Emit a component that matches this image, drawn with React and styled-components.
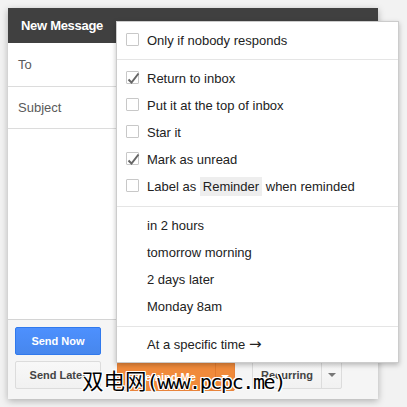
import React from "react";
import styled, { createGlobalStyle } from "styled-components";

const Global = createGlobalStyle`
  html, body { margin: 0; padding: 0; background: #f2f2f2; }
  body { font-family: "Liberation Sans", Arial, sans-serif; }
  * { box-sizing: border-box; }
`;

const Page = styled.div`
  position: relative;
  width: 407px;
  height: 407px;
  padding: 8px;
  overflow: hidden;
`;

const Compose = styled.div`
  position: relative;
  width: 370px;
  height: 391px;
  display: flex;
  flex-direction: column;
  background: #fff;
  box-shadow: 0 2px 7px rgba(0, 0, 0, 0.28);
`;

const Header = styled.div`
  height: 35px;
  flex: none;
  background: #404040;
  color: #fff;
  font-weight: bold;
  font-size: 13px;
  letter-spacing: -0.3px;
  line-height: 35px;
  padding-left: 13px;
`;

const Field = styled.div`
  flex: none;
  height: ${(p) => p.$h}px;
  border-bottom: 1px solid #dcdcdc;
  display: flex;
  align-items: center;
  padding-left: 10px;
  font-size: 13px;
  color: #5a5a5a;
`;

const Body = styled.div`
  flex: 1;
`;

const Footer = styled.div`
  flex: none;
  border-top: 1px solid #d4d4d4;
  background: #f5f5f5;
  padding: 7px 7px 8px 7px;
  display: flex;
  flex-direction: column;
  gap: 6px;
`;

const Row = styled.div`
  display: flex;
  align-items: flex-start;
`;

const Btn = styled.div`
  height: 28px;
  width: ${(p) => p.$w}px;
  margin-right: ${(p) => p.$mr || 0}px;
  border-radius: 2px;
  font-size: 11px;
  font-weight: bold;
  display: flex;
  align-items: center;
  justify-content: center;
  border: 1px solid ${(p) => (p.$primary ? "#3079ed" : "#dcdcdc")};
  background: ${(p) =>
    p.$primary
      ? "linear-gradient(#4d90fe, #4787ed)"
      : "linear-gradient(#f8f8f8, #f1f1f1)"};
  color: ${(p) => (p.$primary ? "#fff" : "#444")};
`;

const Split = styled.div`
  height: ${(p) => (p.$orange ? 29 : 28)}px;
  margin-top: ${(p) => (p.$orange ? 1 : 0)}px;
  margin-right: ${(p) => p.$mr || 0}px;
  display: flex;
  border-radius: 2px;
  border: 1px solid ${(p) => (p.$orange ? "#e8833a" : "#dcdcdc")};
  background: ${(p) =>
    p.$orange ? "#f08a3b" : "linear-gradient(#f8f8f8, #f1f1f1)"};
  color: ${(p) => (p.$orange ? "#fff" : "#444")};
  font-size: 11px;
  font-weight: bold;
`;

const SplitMain = styled.div`
  width: ${(p) => p.$w}px;
  display: flex;
  align-items: center;
  justify-content: center;
`;

const SplitArrow = styled.div`
  width: ${(p) => p.$w}px;
  display: flex;
  align-items: center;
  justify-content: center;
  border-left: 1px solid ${(p) => (p.$orange ? "#e27a2e" : "#dcdcdc")};
`;

const Tri = styled.span`
  width: 0;
  height: 0;
  border-left: 4px solid transparent;
  border-right: 4px solid transparent;
  border-top: 4px solid ${(p) => p.$c};
`;

const Menu = styled.div`
  position: absolute;
  left: 108px;
  top: 13px;
  width: 283px;
  background: #fff;
  border: 1px solid rgba(0, 0, 0, 0.2);
  box-shadow: 0 2px 5px rgba(0, 0, 0, 0.25);
  padding: 5px 0 4px 0;
  display: flex;
  flex-direction: column;
  z-index: 2;
`;

const Item = styled.div`
  flex: none;
  height: 27px;
  display: flex;
  align-items: center;
  padding-left: 30px;
  font-size: 13px;
  color: #222;
  white-space: pre;
  position: relative;
`;

const Box = styled.span`
  position: absolute;
  left: 9px;
  top: 6px;
  width: 13px;
  height: 13px;
  border: 1px solid #c8c8c8;
  background: #fff;
  border-radius: 1px;
`;

const Check = styled.svg`
  position: absolute;
  left: -1px;
  top: -1px;
  overflow: visible;
`;

const Sep = styled.div`
  flex: none;
  height: 1px;
  background: #e5e5e5;
  margin: ${(p) => p.$mt || 5}px 0 ${(p) => p.$mb || 5}px 0;
`;

const Chip = styled.span`
  display: inline-block;
  background: #eee;
  padding: 3px 3px;
  line-height: 13px;
`;

const Arrow = styled.span`
  font-family: "DejaVu Sans", sans-serif;
  font-size: 15px;
  line-height: 13px;
`;

const Watermark = styled.div`
  position: absolute;
  left: 82px;
  top: 366px;
  z-index: 3;
  line-height: 28px;
  color: #000;
  white-space: nowrap;
  text-shadow: -1px -1px 0 #fff, 1px -1px 0 #fff, -1px 1px 0 #fff,
    1px 1px 0 #fff, 0 1px 0 #fff, 0 -1px 0 #fff, 1px 0 0 #fff, -1px 0 0 #fff;
`;

const Han = styled.span`
  font-family: "Noto Sans CJK SC", sans-serif;
  font-size: 21.5px;
`;

const Latin = styled.span`
  font-family: "DejaVu Sans Mono", monospace;
  font-size: 20px;
  letter-spacing: -1.4px;
`;

const CheckItem = ({ checked, children }) => (
  <Item>
    <Box>
      {checked && (
        <Check width="15" height="15" viewBox="0 0 15 15">
          <path
            d="M2.5 8.5 L5.5 11.5 L12.5 2.5"
            fill="none"
            stroke="#666"
            strokeWidth="2"
          />
        </Check>
      )}
    </Box>
    {children}
  </Item>
);

export default function App() {
  return (
    <Page>
      <Global />
      <Compose>
        <Header>New Message</Header>
        <Field $h={44}>To</Field>
        <Field $h={42}>Subject</Field>
        <Body />
        <Footer>
          <Row>
            <Btn $primary $w={86}>Send Now</Btn>
          </Row>
          <Row>
            <Btn $w={86} $mr={16}>Send Later</Btn>
            <Split $orange $mr={17}>
              <SplitMain $w={97}>Remind Me</SplitMain>
              <SplitArrow $orange $w={19}>
                <Tri $c="#fff" />
              </SplitArrow>
            </Split>
            <Split>
              <SplitMain $w={68}>Recurring</SplitMain>
              <SplitArrow $w={20}>
                <Tri $c="#777" />
              </SplitArrow>
            </Split>
          </Row>
        </Footer>
        <Menu>
          <CheckItem>Only if nobody responds</CheckItem>
          <Sep $mt={5} $mb={5} />
          <CheckItem checked>Return to inbox</CheckItem>
          <CheckItem>Put it at the top of inbox</CheckItem>
          <CheckItem>Star it</CheckItem>
          <CheckItem checked>Mark as unread</CheckItem>
          <CheckItem>
            {"Label as "}
            <Chip>Reminder</Chip>
            {" when reminded"}
          </CheckItem>
          <Sep $mt={6} $mb={5} />
          <Item>in 2 hours</Item>
          <Item>tomorrow morning</Item>
          <Item>2 days later</Item>
          <Item>Monday 8am</Item>
          <Sep $mt={6} $mb={4} />
          <Item>
            {"At a specific time "}
            <Arrow>→</Arrow>
          </Item>
        </Menu>
      </Compose>
      <Watermark>
        <Han>双电网</Han>
        <Latin>(www.pcpc.me)</Latin>
      </Watermark>
    </Page>
  );
}
